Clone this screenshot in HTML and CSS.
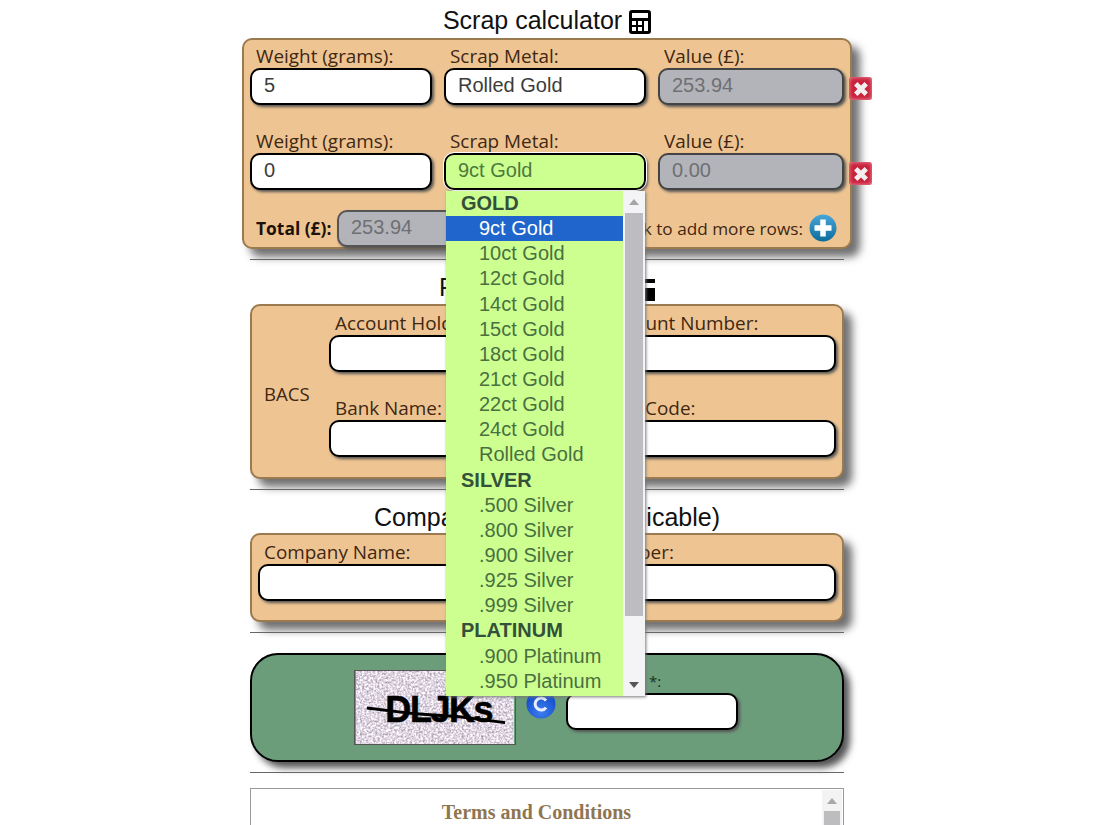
FILE: index.html
```html
<!DOCTYPE html>
<html lang="en">
<head>
<meta charset="utf-8">
<title>Scrap calculator</title>
<link rel="stylesheet" href="styles.css">
</head>
<body>
<main class="page">
  <h2 class="heading heading-first">Scrap calculator
    <svg class="calc-icon" viewBox="0 0 22 24"><path fill="#000" fill-rule="evenodd" d="M3 0h16a3 3 0 0 1 3 3v18a3 3 0 0 1-3 3H3a3 3 0 0 1-3-3V3a3 3 0 0 1 3-3zM3 3v5h16V3zM3 11v4h4v-4zM9 11v4h4v-4zM3 17v4h4v-4zM9 17v4h4v-4zM15 11v10h4V11z"/></svg>
  </h2>
  <section class="panel panel-calc">
    <div class="calc-row">
      <label class="field"><span class="lbl">Weight (grams):</span><span class="box">5</span></label>
      <label class="field"><span class="lbl">Scrap Metal:</span><span class="box box-select">Rolled Gold</span></label>
      <label class="field"><span class="lbl">Value (£):</span><span class="box box-off">253.94</span></label>
      <span class="del"><svg viewBox="0 0 12 12"><path d="M2.500 2.500l7 7M9.500 2.500l-7 7" stroke="#f4eeee" stroke-width="3.200"/></svg></span>
    </div>
    <div class="calc-row">
      <label class="field"><span class="lbl">Weight (grams):</span><span class="box">0</span></label>
      <label class="field"><span class="lbl">Scrap Metal:</span><span class="box box-select box-focus">9ct Gold</span></label>
      <label class="field"><span class="lbl">Value (£):</span><span class="box box-off">0.00</span></label>
      <span class="del"><svg viewBox="0 0 12 12"><path d="M2.500 2.500l7 7M9.500 2.500l-7 7" stroke="#f4eeee" stroke-width="3.200"/></svg></span>
    </div>
    <div class="total-row">
      <b class="total-lbl">Total (£):</b>
      <span class="box box-off box-total">253.94</span>
      <span class="add-text">Click to add more rows:</span>
      <svg class="add-icon" viewBox="0 0 28 28"><defs><linearGradient id="blue" x1="0" y1="0" x2="0" y2="1"><stop offset="0" stop-color="#4aa6d8"/><stop offset="1" stop-color="#0b6c9c"/></linearGradient></defs><circle cx="14" cy="14" r="13.500" fill="url(#blue)"/><path d="M14 5.500v17M5.500 14h17" stroke="#fff" stroke-width="5.500"/></svg>
    </div>
  </section>
  <hr class="rule">
  <h2 class="heading">Payment Details
    <svg class="calc-icon calc-icon-wide" viewBox="0 0 22 24"><path fill="#000" d="M0 2h22v4H0zM0 11h22v13H0z"/></svg>
  </h2>
  <section class="panel panel-bank">
    <div class="bacs">BACS</div>
    <div class="bank-grid">
      <label class="field"><span class="lbl">Account Holder:</span><span class="box"></span></label>
      <label class="field"><span class="lbl">Account Number:</span><span class="box"></span></label>
      <label class="field"><span class="lbl">Bank Name:</span><span class="box"></span></label>
      <label class="field"><span class="lbl">Sort Code:</span><span class="box"></span></label>
    </div>
  </section>
  <hr class="rule">
  <h2 class="heading heading-company">Company Details (if applicable)</h2>
  <section class="panel panel-company">
    <label class="field"><span class="lbl">Company Name:</span><span class="box"></span></label>
    <label class="field"><span class="lbl">Company Number:</span><span class="box"></span></label>
  </section>
  <hr class="rule">
  <section class="captcha">
    <svg class="captcha-img" viewBox="0 0 162 75">
      <defs><filter id="noise" x="0" y="0" width="100%" height="100%" color-interpolation-filters="sRGB"><feTurbulence type="fractalNoise" baseFrequency="0.45" numOctaves="3" seed="4"/><feColorMatrix type="matrix" values="0.700 0 0.050 0 0.500  0.700 0 0 0 0.490  0.700 0 0.060 0 0.510  0 0 0 0 1"/></filter></defs>
      <rect width="162" height="75" filter="url(#noise)"/>
      <text class="captcha-text" x="30" y="52">DLJKs</text>
      <path d="M11 38l50 6 45 3 47 6" stroke="#000" stroke-width="3" fill="none"/>
    </svg>
    <svg class="refresh" viewBox="0 0 30 30"><defs><radialGradient id="rb" cx=".5" cy=".75" r=".7"><stop offset="0" stop-color="#3f7ff0"/><stop offset="1" stop-color="#0f47c8"/></radialGradient></defs><circle cx="15" cy="15" r="14.500" fill="url(#rb)"/><path d="M20 11.500a6 6 0 1 0 0 7" stroke="#e8f0ff" stroke-width="3" fill="none"/></svg>
    <label class="field captcha-field"><span class="lbl lbl-small">Enter code *:</span><span class="box"></span></label>
  </section>
  <hr class="rule">
  <section class="terms">
    <h3 class="terms-title">Terms and Conditions</h3>
    <div class="terms-bar"><span class="bar-up"></span><span class="bar-thumb"></span></div>
  </section>
</main>
<div class="dropdown">
  <ul class="options">
    <li class="grp">GOLD</li>
    <li class="opt sel">9ct Gold</li>
    <li class="opt">10ct Gold</li>
    <li class="opt">12ct Gold</li>
    <li class="opt">14ct Gold</li>
    <li class="opt">15ct Gold</li>
    <li class="opt">18ct Gold</li>
    <li class="opt">21ct Gold</li>
    <li class="opt">22ct Gold</li>
    <li class="opt">24ct Gold</li>
    <li class="opt">Rolled Gold</li>
    <li class="grp">SILVER</li>
    <li class="opt">.500 Silver</li>
    <li class="opt">.800 Silver</li>
    <li class="opt">.900 Silver</li>
    <li class="opt">.925 Silver</li>
    <li class="opt">.999 Silver</li>
    <li class="grp">PLATINUM</li>
    <li class="opt">.900 Platinum</li>
    <li class="opt">.950 Platinum</li>
  </ul>
  <div class="dd-bar">
    <span class="arrow-up"></span>
    <span class="dd-thumb"></span>
    <span class="arrow-down"></span>
  </div>
</div>
</body>
</html>
```

FILE: styles.css
```css
* { box-sizing: border-box; }
html, body { margin: 0; height: 825px; overflow: hidden; background: #fff; }
body { position: relative; font-family: "Liberation Sans", Arial, sans-serif; }
.page { width: 594px; margin-left: 250px; }
.heading { margin: 0; height: 33px; font-size: 25px; font-weight: 400; line-height: 33px; text-align: center; color: #111; }
.heading-first { height: 38px; padding-top: 4px; }
.heading-company { height: 32px; }
.calc-icon { width: 22px; height: 24px; vertical-align: -5px; }
.calc-icon-wide { margin-left: 5px; }
.panel { background: #eec592; border: 2px solid #9a7a4e; border-radius: 10px; box-shadow: 8px 8px 8px #707070; }
.panel-calc { width: 610px; height: 211px; margin-left: -8px; padding: 8px 6px 0; }
.calc-row { display: flex; height: 85px; position: relative; }
.field { display: flex; flex-direction: column; }
.lbl { font-family: "Open Sans", sans-serif; font-size: 18.9px; line-height: 16px; height: 20px; padding-left: 6px; color: #3f2712; white-space: nowrap; }
.box { display: block; height: 36.5px; padding: 0 12px; background: #fff; border: 2px solid #000; border-radius: 10px; box-shadow: 2px 2px 3px #555; font-size: 20px; line-height: 31px; color: #3c3c3c; }
.calc-row .field:nth-child(1) { width: 182px; margin-right: 12px; }
.calc-row .field:nth-child(2) { width: 202px; margin-right: 12px; }
.calc-row .field:nth-child(3) { width: 186px; }
.box-off { background: #b3b4b9; border-color: #444; color: #6e6f74; }
.box-focus { background: #ccff90; color: #4c7a3c; outline: 1px solid #fff; }
.del { position: absolute; left: 599px; top: 29px; width: 23px; height: 23px; border-radius: 3px; background: #c8213c; box-shadow: inset 0 0 4px #f2a0ac; display: flex; align-items: center; justify-content: center; }
.del svg { width: 18px; height: 18px; }
.total-row { display: flex; align-items: center; height: 36.5px; margin-top: -8px; padding-right: 7px; }
.total-lbl { font-family: "Open Sans", sans-serif; font-size: 17.4px; padding-left: 6px; color: #1c1209; width: 87px; white-space: nowrap; }
.box-total { width: 160px; border-color: #555; }
.add-text { font-family: "Open Sans", sans-serif; font-size: 17.2px; color: #3f2712; margin-left: auto; white-space: nowrap; }
.add-icon { width: 28px; height: 28px; margin-left: 6px; }
.rule { height: 1px; margin: 10px 0 0; border: 0; background: #666; }
.rule + .heading { margin-top: 11px; }
.panel-bank { display: flex; height: 175px; padding: 9px 6px 0 12px; }
.bacs { width: 65px; margin-top: 67px; font-family: "Open Sans", sans-serif; font-size: 18.6px; line-height: 24px; color: #3f2712; }
.bank-grid { flex: 1; display: grid; grid-template-columns: 259px 238px; gap: 28.5px 10px; align-content: start; }
.panel-company { display: grid; grid-template-columns: 233px 335px; gap: 10px; height: 89px; padding: 9px 6px 0; }
.captcha { display: flex; align-items: flex-start; height: 109px; margin-top: 20px; padding: 15px 0 0 102px; background: #6b9d7b; border: 2px solid #000; border-radius: 28px; box-shadow: 6px 6px 7px #555; }
.captcha-img { width: 162px; height: 75px; border: 1px solid #555; }
.captcha-text { font-family: "Liberation Sans", sans-serif; font-weight: 700; font-size: 37px; letter-spacing: -1.500px; fill: #000; stroke: #000; stroke-width: .6px; }
.refresh { width: 30px; height: 30px; margin: 19px 10px 0; }
.captcha-field { width: 172px; margin-top: 3px; }
.lbl-small { font-size: 15px; color: #17301f; padding-left: 4px; }
.captcha + .rule { margin-top: 10px; }
.terms { position: relative; height: 120px; margin-top: 15px; padding-right: 21px; border: 1px solid #999; text-align: center; }
.terms-title { margin: 12px 0 0; font-family: "Liberation Serif", serif; font-size: 20px; font-weight: 700; line-height: 22px; color: #8f7550; }
.terms-bar { position: absolute; right: 1px; top: 1px; bottom: 0; width: 20px; background: #f3f3f3; }
.bar-up { position: absolute; left: 5px; top: 8px; border: 5px solid transparent; border-top: 0; border-bottom: 6px solid #a8a8a8; }
.bar-thumb { position: absolute; left: 2px; right: 2px; top: 21px; bottom: 0; background: #bdbdc0; }
.dropdown { position: absolute; left: 446px; top: 191px; display: flex; width: 199px; height: 505px; box-shadow: 1px 1px 3px #777; background: #f4f3f5; }
.options { margin: 0; padding: 0; list-style: none; width: 177px; height: 505px; background: #ccff90; }
.options li { height: 25.15px; line-height: 25px; font-size: 20px; white-space: nowrap; color: #4a7040; }
.grp { padding-left: 15px; font-weight: 700; color: #34503a !important; }
.opt { padding-left: 33px; }
.sel { background: #2065cc; color: #fff !important; }
.dd-bar { position: relative; flex: 1; }
.arrow-up { position: absolute; left: 6px; top: 8px; border: 5px solid transparent; border-top: 0; border-bottom: 6px solid #a6a6a8; }
.dd-thumb { position: absolute; left: 2px; right: 2px; top: 22px; height: 403px; background: #bdbcc0; }
.arrow-down { position: absolute; left: 6px; bottom: 8px; border: 5px solid transparent; border-bottom: 0; border-top: 6px solid #555; }
```
